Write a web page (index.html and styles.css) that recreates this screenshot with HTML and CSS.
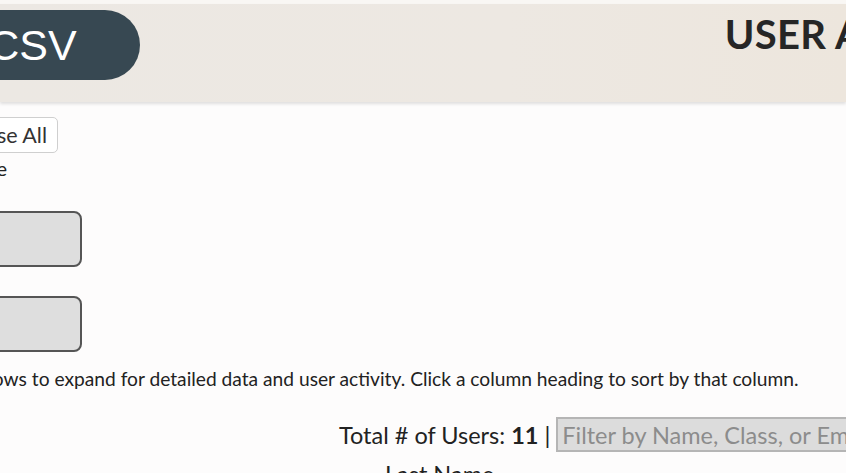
FILE: index.html
```html
<html>
<head>
<meta charset="utf-8" />
<link rel="stylesheet" href="styles.css">
</head>
<body>
    <div class="top-strip"></div>
    <header class="topbar">
        <button class="csv-btn">Export CSV</button>
        <h1 class="title">USER ACTIVITY</h1>
    </header>

    <div class="page">
        <div class="controls">
            <div class="btn-row">
                <button class="small-btn">Expand All</button>
                <button class="small-btn">Collapse All</button>
            </div>
            <div class="toggle-label">Show Inactive</div>
            <div class="field-box"></div>
            <div class="field-box"></div>
        </div>

        <p class="hint">Click on rows to expand for detailed data and user activity. Click a column heading to sort by that column.</p>

        <div class="stats">
            Total # of Users: <b>11</b> | <input class="filter" type="text" placeholder="Filter by Name, Class, or Email">
        </div>

        <div class="table-head">
            <span class="col">Last Name</span>
        </div>
    </div>
</body>
</html>
```

FILE: styles.css
```css
body {
    margin: 0px;
    font-family: Lato, "Open Sans", sans-serif;
    color: #222;
    background: #fdfcfc;
    overflow: hidden;
}
.top-strip {
    height: 4px;
    background: #f9f7f4;
}
.topbar {
    height: 98px;
    background: linear-gradient(90deg, #ece8e3 0%, #ede8e2 60%, #ede6dd 100%);
    box-shadow: 0px 2px 3px rgba(0,0,0,0.12);
    display: flex;
    align-items: flex-start;
    overflow: hidden;
    white-space: nowrap;
}
.csv-btn {
    flex-shrink: 0;
    margin-top: 6px;
    margin-left: -178px;
    height: 70px;
    padding: 0px 63px 0px 30px;
    border: none;
    border-radius: 35px;
    background: #374852;
    color: #fff;
    font-family: "Liberation Sans", Arial, sans-serif;
    font-size: 43px;
}
.title {
    flex-shrink: 0;
    margin: 6px 0px 0px 585px;
    font-size: 40px;
    font-weight: bold;
    color: #262626;
    letter-spacing: 0.3px;
}
.page {
    white-space: nowrap;
}
.controls {
    margin-left: -200px;
    padding-top: 15px;
}
.btn-row {
    width: 258px;
    display: flex;
    justify-content: flex-end;
    gap: 6px;
}
.small-btn {
    height: 36px;
    padding: 0px 10px;
    background: #fff;
    border: 1px solid #cfcfcf;
    border-radius: 5px;
    font-family: Lato, sans-serif;
    font-size: 21.5px;
    color: #333;
}
.toggle-label {
    width: 207px;
    text-align: right;
    font-size: 20px;
    line-height: 30px;
    margin-top: 0px;
}
.field-box {
    width: 278px;
    height: 52px;
    margin-top: 28px;
    background: #dedede;
    border: 2px solid #555;
    border-radius: 8px;
}
.field-box + .field-box {
    margin-top: 29px;
}
.hint {
    margin: 14px 0px 0px -86px;
    font-size: 19.2px;
    line-height: 26px;
    color: #222;
}
.stats {
    margin-top: 25px;
    padding-left: 339px;
    font-size: 23.5px;
    display: flex;
    align-items: center;
    gap: 6px;
}
.filter {
    width: 400px;
    height: 35px;
    box-sizing: border-box;
    padding: 2px 4px;
    background: #dcdcdc;
    border: 2px solid #b5b5b5;
    font-family: Lato, sans-serif;
    font-size: 23.5px;
    color: #333;
}
.filter::placeholder {
    color: #8c8c8c;
}
.table-head {
    margin-top: 8px;
    padding-left: 385px;
    font-size: 23.5px;
}
```
